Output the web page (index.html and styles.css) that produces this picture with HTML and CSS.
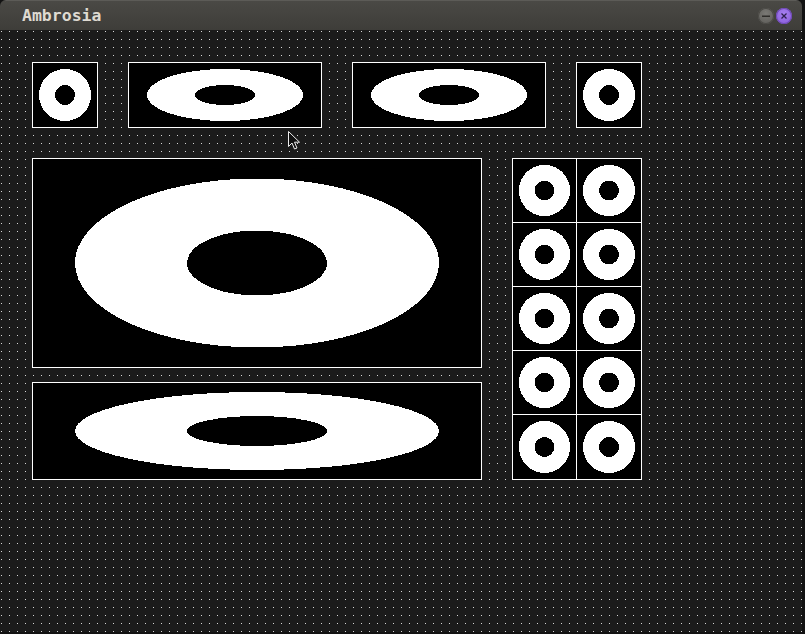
FILE: index.html
```html
<!DOCTYPE html>
<html>
<head>
<meta charset="utf-8">
<title>Ambrosia</title>
<link rel="stylesheet" href="styles.css">
</head>
<body>
<div class="window">
  <div class="titlebar">
    <span class="title">Ambrosia</span>
    <div class="controls">
      <span class="btn btn-min"><svg width="16" height="16" viewBox="0 0 16 16"><rect x="4" y="7.5" width="8" height="1.5" fill="#2e2d2a"/></svg></span>
      <span class="btn btn-close"><svg width="16" height="16" viewBox="0 0 16 16"><path d="M5.5 5.5 L10.5 10.5 M10.5 5.5 L5.5 10.5" stroke="#2f2150" stroke-width="1.3"/></svg></span>
    </div>
  </div>
  <div class="content">
    <div class="row-top">
      <div class="box sq"><svg class="ring" viewBox="0 0 64 64" preserveAspectRatio="none"><path d="M6 32a26 26 0 1 0 52 0a26 26 0 1 0-52 0ZM22 32a10 10 0 1 0 20 0a10 10 0 1 0-20 0Z"/></svg></div>
      <div class="box wide"><svg class="ring" viewBox="0 0 64 64" preserveAspectRatio="none"><path d="M6 32a26 26 0 1 0 52 0a26 26 0 1 0-52 0ZM22 32a10 10 0 1 0 20 0a10 10 0 1 0-20 0Z"/></svg></div>
      <div class="box wide"><svg class="ring" viewBox="0 0 64 64" preserveAspectRatio="none"><path d="M6 32a26 26 0 1 0 52 0a26 26 0 1 0-52 0ZM22 32a10 10 0 1 0 20 0a10 10 0 1 0-20 0Z"/></svg></div>
      <div class="box sq"><svg class="ring" viewBox="0 0 64 64" preserveAspectRatio="none"><path d="M6 32a26 26 0 1 0 52 0a26 26 0 1 0-52 0ZM22 32a10 10 0 1 0 20 0a10 10 0 1 0-20 0Z"/></svg></div>
    </div>
    <div class="row-main">
      <div class="col-left">
        <div class="box big"><svg class="ring" viewBox="0 0 64 64" preserveAspectRatio="none"><path d="M6 32a26 26 0 1 0 52 0a26 26 0 1 0-52 0ZM22 32a10 10 0 1 0 20 0a10 10 0 1 0-20 0Z"/></svg></div>
        <div class="box flat"><svg class="ring" viewBox="0 0 64 64" preserveAspectRatio="none"><path d="M6 32a26 26 0 1 0 52 0a26 26 0 1 0-52 0ZM22 32a10 10 0 1 0 20 0a10 10 0 1 0-20 0Z"/></svg></div>
      </div>
      <div class="grid">
        <div class="cell"><svg class="ring" viewBox="0 0 64 64" preserveAspectRatio="none"><path d="M6 32a26 26 0 1 0 52 0a26 26 0 1 0-52 0ZM22 32a10 10 0 1 0 20 0a10 10 0 1 0-20 0Z"/></svg></div>
        <div class="cell"><svg class="ring" viewBox="0 0 64 64" preserveAspectRatio="none"><path d="M6 32a26 26 0 1 0 52 0a26 26 0 1 0-52 0ZM22 32a10 10 0 1 0 20 0a10 10 0 1 0-20 0Z"/></svg></div>
        <div class="cell"><svg class="ring" viewBox="0 0 64 64" preserveAspectRatio="none"><path d="M6 32a26 26 0 1 0 52 0a26 26 0 1 0-52 0ZM22 32a10 10 0 1 0 20 0a10 10 0 1 0-20 0Z"/></svg></div>
        <div class="cell"><svg class="ring" viewBox="0 0 64 64" preserveAspectRatio="none"><path d="M6 32a26 26 0 1 0 52 0a26 26 0 1 0-52 0ZM22 32a10 10 0 1 0 20 0a10 10 0 1 0-20 0Z"/></svg></div>
        <div class="cell"><svg class="ring" viewBox="0 0 64 64" preserveAspectRatio="none"><path d="M6 32a26 26 0 1 0 52 0a26 26 0 1 0-52 0ZM22 32a10 10 0 1 0 20 0a10 10 0 1 0-20 0Z"/></svg></div>
        <div class="cell"><svg class="ring" viewBox="0 0 64 64" preserveAspectRatio="none"><path d="M6 32a26 26 0 1 0 52 0a26 26 0 1 0-52 0ZM22 32a10 10 0 1 0 20 0a10 10 0 1 0-20 0Z"/></svg></div>
        <div class="cell"><svg class="ring" viewBox="0 0 64 64" preserveAspectRatio="none"><path d="M6 32a26 26 0 1 0 52 0a26 26 0 1 0-52 0ZM22 32a10 10 0 1 0 20 0a10 10 0 1 0-20 0Z"/></svg></div>
        <div class="cell"><svg class="ring" viewBox="0 0 64 64" preserveAspectRatio="none"><path d="M6 32a26 26 0 1 0 52 0a26 26 0 1 0-52 0ZM22 32a10 10 0 1 0 20 0a10 10 0 1 0-20 0Z"/></svg></div>
        <div class="cell"><svg class="ring" viewBox="0 0 64 64" preserveAspectRatio="none"><path d="M6 32a26 26 0 1 0 52 0a26 26 0 1 0-52 0ZM22 32a10 10 0 1 0 20 0a10 10 0 1 0-20 0Z"/></svg></div>
        <div class="cell"><svg class="ring" viewBox="0 0 64 64" preserveAspectRatio="none"><path d="M6 32a26 26 0 1 0 52 0a26 26 0 1 0-52 0ZM22 32a10 10 0 1 0 20 0a10 10 0 1 0-20 0Z"/></svg></div>
      </div>
    </div>
    <svg class="cursor" width="14" height="20" viewBox="0 0 14 20"><path d="M0.5 0.5 L0.5 15.5 L4 12 L6.5 18 L9 17 L6.5 11.2 L11.5 11.2 Z" fill="#111" stroke="#eee" stroke-width="1"/></svg>
  </div>
</div>
</body>
</html>
```
FILE: styles.css
```css
html, body {
  margin: 0;
  padding: 0;
  background: #121212;
}
.window {
  width: 802px;
  height: 632px;
  display: flex;
  flex-direction: column;
  overflow: hidden;
  border-radius: 6px 6px 0 0;
}
.titlebar {
  height: 30px;
  flex: none;
  display: flex;
  align-items: center;
  justify-content: space-between;
  padding: 0 10px 0 22px;
  box-sizing: border-box;
  background: linear-gradient(#4a4945, #3e3d39);
  border-top: 1px solid #5c5b57;
}
.title {
  font-family: "DejaVu Sans Mono", monospace;
  font-weight: bold;
  font-size: 16.5px;
  color: #dedad1;
}
.controls {
  display: flex;
  gap: 2px;
  margin-top: 1px;
}
.btn {
  width: 16px;
  height: 16px;
  border-radius: 50%;
  display: block;
}
.btn svg { display: block; }
.btn-min {
  background: radial-gradient(circle at 50% 35%, #7a7975, #5a5955);
  box-shadow: inset 0 0 0 1px #4a4945;
}
.btn-close {
  background: radial-gradient(circle at 50% 35%, #a57ff0, #8659d6);
  box-shadow: inset 0 0 0 1px #6e48b4;
}
.content {
  flex: 1;
  position: relative;
  background-color: #1b1b1b;
  background-image:
    linear-gradient(to right, transparent 0 1px, #1b1b1b 1px 8px),
    linear-gradient(to bottom, #d6d6d6 0 1px, #1b1b1b 1px 8px);
  background-size: 8px 8px, 8px 8px;
  background-position: 1px 1px, 1px 1px;
  padding: 32px 0 0 32px;
  display: flex;
  flex-direction: column;
  gap: 30px;
}
.row-top {
  display: flex;
  gap: 30px;
}
.row-main {
  display: flex;
  gap: 30px;
  align-items: flex-start;
}
.col-left {
  display: flex;
  flex-direction: column;
  gap: 14px;
}
.box {
  border: 1px solid #fff;
  background: #000;
  display: block;
}
.sq { width: 64px; height: 64px; }
.wide { width: 192px; height: 64px; }
.big { width: 448px; height: 208px; }
.flat { width: 448px; height: 96px; }
.grid {
  display: grid;
  grid-template-columns: 63px 64px;
  grid-template-rows: 63px 63px 63px 63px 64px;
  gap: 1px;
  padding: 1px;
  background: #fff;
}
.cell {
  background: #000;
}
.ring {
  display: block;
  width: 100%;
  height: 100%;
  fill: #fff;
  fill-rule: evenodd;
  shape-rendering: crispEdges;
}
.cursor {
  position: absolute;
  left: 288px;
  top: 101px;
}
```
